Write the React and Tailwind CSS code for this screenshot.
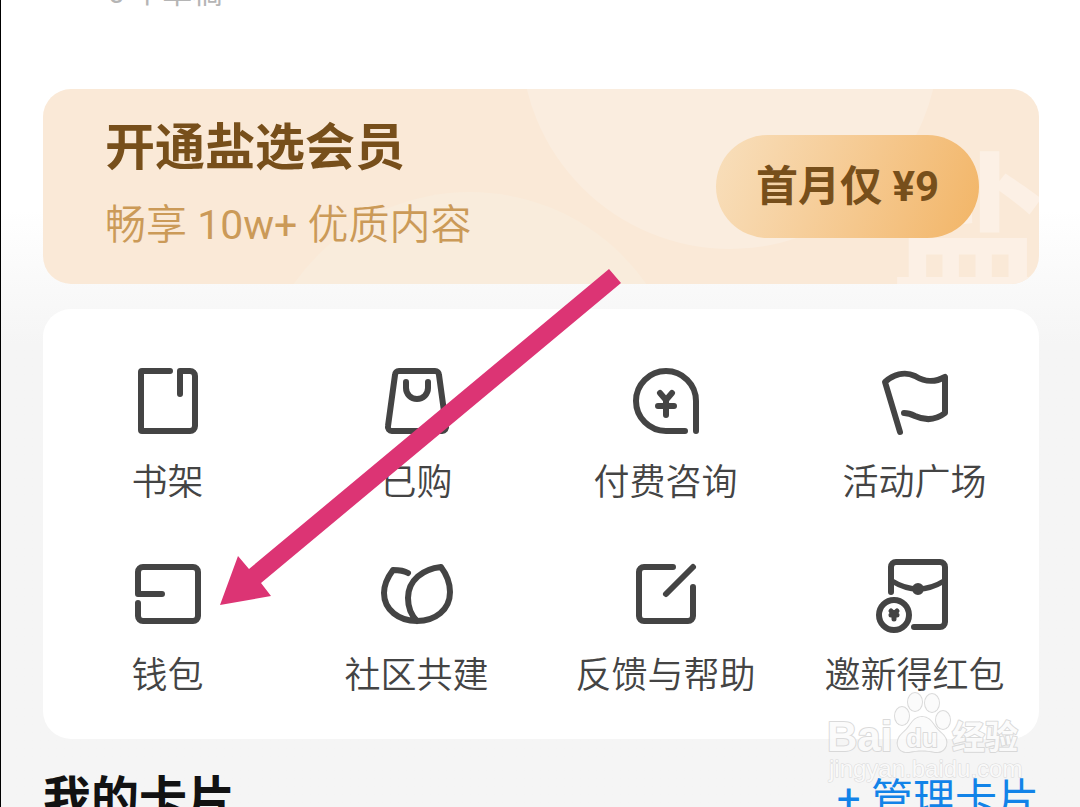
const BookIcon = () => (
  <path d="M38 6H10a1 1 0 0 0-1 1V65a1 1 0 0 0 1 1H58a5 5 0 0 0 5-5V11a5 5 0 0 0-5-5H48V29" />
);

const BagIcon = () => (
  <>
    <path d="M18 6H54a4 4 0 0 1 4 4L65 61a4 4 0 0 1-4 5H11a4 4 0 0 1-4-5L14 10a4 4 0 0 1 4-4Z" />
    <path d="M25 17v6a11 11 0 0 0 22 0v-6" />
  </>
);

const ConsultIcon = () => (
  <>
    <path d="M66 66V36a30 30 0 1 0-30 30H55" />
    <path d="M30 28l6 7 6-7M28 41H44M36 35V50" />
  </>
);

const FlagIcon = () => (
  <path d="M21 67L6 17C14 10 25 6 36 11C46 17 55 18 66 12V48C57 55 47 56 36 51C32 49 28 48 25 48" />
);

const WalletIcon = () => (
  <path d="M30 36H6V14a5 5 0 0 1 5-5H61a5 5 0 0 1 5 5V58a5 5 0 0 1-5 5H11a5 5 0 0 1-5-5V45" />
);

const CommunityIcon = () => (
  <path d="M27 15C22 12 17 12 12 12C6 20 3 27 3 35C3 52 18 63 36 63C54 63 69 52 69 34C69 25 66 17 60 9C42 11 27 22 27 40C27 49 30 57 36 63" />
);

const FeedbackIcon = () => (
  <path d="M43 9H14a5 5 0 0 0-5 5V58a5 5 0 0 0 5 5H58a5 5 0 0 0 5-5V29M63 9L36 36" />
);

const RedPacketIcon = () => (
  <>
    <path d="M12 34V9a5 5 0 0 1 5-5H61a5 5 0 0 1 5 5V64a5 5 0 0 1-5 5H35" />
    <path strokeWidth="5" d="M13 23Q39 39 65 23" />
    <circle cx="39" cy="31" r="3" />
    <circle cx="15" cy="57" r="15" />
    <path strokeWidth="5" d="M12 53l3 3 3-3M12 57H18M15 56V61" />
  </>
);

const services = [
  { label: "书架", Icon: BookIcon },
  { label: "已购", Icon: BagIcon },
  { label: "付费咨询", Icon: ConsultIcon },
  { label: "活动广场", Icon: FlagIcon },
  { label: "钱包", Icon: WalletIcon },
  { label: "社区共建", Icon: CommunityIcon },
  { label: "反馈与帮助", Icon: FeedbackIcon },
  { label: "邀新得红包", Icon: RedPacketIcon },
];

const BannerBackdrop = () => (
  <svg
    aria-hidden="true"
    className="absolute inset-0 h-full w-full"
    viewBox="0 0 996 195"
    preserveAspectRatio="xMaxYMid slice"
  >
    <circle cx="427" cy="318" r="215" fill="#f9ecdc" />
    <circle cx="687" cy="-49" r="209" fill="#faeddf" />
    <text x="847" y="194" fontSize="155" fontWeight="700" fill="#fcf0e5">
      盐
    </text>
  </svg>
);

const MemberBanner = () => (
  <section className="relative flex items-center justify-between overflow-hidden rounded-[28px] bg-[#fae9d7] py-[27px] pr-[60px] pl-[62px]">
    <BannerBackdrop />
    <div className="relative">
      <h2 className="text-[50px] leading-[64px] font-bold text-[#774f1b]">开通盐选会员</h2>
      <p className="mt-3.5 text-[41px] leading-[63px] text-[#cb9a58]">
        <span className="font-[350]">畅享</span> 10w+ <span className="font-[350]">优质内容</span>
      </p>
    </div>
    <button className="relative h-[103px] rounded-full bg-linear-110 from-[#f8dfbc] to-[#f2b566] px-10 text-[42px] font-bold text-[#774f1b]">
      首月仅 ¥9
    </button>
  </section>
);

const ServiceGrid = () => (
  <section className="mt-[25px] grid grid-cols-4 gap-y-[49px] rounded-[28px] bg-white pt-14 pb-[37px]">
    {services.map(({ label, Icon }) => (
      <button key={label} className="flex flex-col items-center text-[#444444]">
        <svg
          aria-hidden="true"
          className="size-[72px] overflow-visible"
          viewBox="0 0 72 72"
          fill="none"
          stroke="currentColor"
          strokeWidth="6"
          strokeLinecap="round"
          strokeLinejoin="round"
        >
          <Icon />
        </svg>
        <span className="mt-5 text-[36px] leading-[52px] font-[350] whitespace-nowrap">{label}</span>
      </button>
    ))}
  </section>
);

// Arrow pointing at the wallet entry
const PointerArrow = () => (
  <svg
    aria-hidden="true"
    className="pointer-events-none absolute top-[269px] left-[219px] h-[336px] w-[401px]"
    viewBox="220 269 401 336"
  >
    <path fill="#dc3474" d="M220 605L238 556L249 569L609 269L621 283L261 583L271 596Z" />
  </svg>
);

const Watermark = () => (
  <svg
    aria-hidden="true"
    className="pointer-events-none absolute top-[690px] right-[54px] h-[96px] w-[200px] font-['Liberation_Sans','Noto_Sans_CJK_SC',sans-serif] opacity-80"
    viewBox="826 690 200 96"
    fill="#fbfbfb"
    stroke="#d2d2d2"
    strokeWidth="2"
    paintOrder="stroke"
    strokeLinejoin="round"
  >
    <g fontWeight="700">
      <text x="827" y="751" fontSize="42">Bai</text>
      <ellipse cx="902" cy="716" rx="7" ry="9" />
      <ellipse cx="915" cy="702" rx="7" ry="9" />
      <ellipse cx="932" cy="703" rx="7" ry="9" />
      <ellipse cx="943" cy="720" rx="7" ry="9" />
      <path d="M922 717C932 717 933 727 941 733C951 741 946 753 935 752C926 750 918 750 909 752C897 753 894 741 903 733C911 727 912 717 922 717Z" />
      <text x="906" y="747" fontSize="26">du</text>
      <text x="952" y="749" fontSize="33">经验</text>
    </g>
    <text x="829" y="777" fontSize="24" strokeWidth="1">jingyan.baidu.com</text>
  </svg>
);

export default function App() {
  return (
    <main className="relative h-screen overflow-hidden border-l border-black bg-[#f5f5f5] bg-linear-to-b from-white from-[210px] to-[#f5f5f5] to-[345px] pr-[41px] pl-[42px] font-['Roboto','Noto_Sans_CJK_SC',sans-serif]">
      <header className="flex h-[9px] items-end overflow-hidden pl-[65px]">
        <p className="text-[30px] leading-8 text-[#b5b5b5]">0 个草稿</p>
      </header>

      <div className="mt-20">
        <MemberBanner />
        <ServiceGrid />
      </div>

      <section className="mt-[25px] flex items-center justify-between">
        <h2 className="text-[48px] leading-[72px] font-bold text-[#121212]">我的卡片</h2>
        <button className="text-[42px] leading-[72px] text-[#1283e8]">+ 管理卡片</button>
      </section>

      <PointerArrow />
      <Watermark />
    </main>
  );
}
